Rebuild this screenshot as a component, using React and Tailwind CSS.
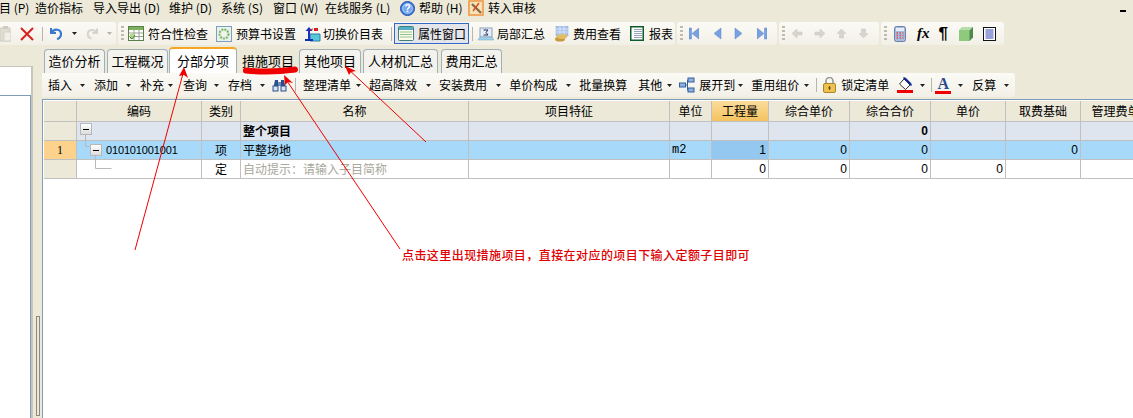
import React from 'react';

const Arrow = ({ className = 'ml-[4px]' }) => <span className={`w-[5px] h-[3px] shrink-0 ${className}`}><svg width="5" height="3" className="block"><path d="M0 0h5L2.500 3z" fill="#222"/></svg></span>;
const T = ({ children, className = '' }) => <span className={`whitespace-nowrap shrink-0 ${className}`}>{children}</span>;
const Sep = ({ className = '' }) => <span className={`w-px h-[14px] bg-[#b8b6a8] shrink-0 ${className}`} />;
const Grip = ({ className = '' }) => <span className={`w-[3px] h-[15px] shrink-0 bg-[repeating-linear-gradient(#bdbbb0_0_2px,transparent_2px_4px)] ${className}`} />;

const Blue = ({ d }) => <svg width="10" height="13" viewBox="0 0 10 13" className="shrink-0"><path d={d} fill="#7aa2e0" stroke="#5b86cc" strokeWidth=".5"/></svg>;
const Gray = ({ d }) => <svg width="11" height="11" viewBox="0 0 11 11" className="shrink-0"><path d={d} fill="#d5d4ce" stroke="#c8c7c0" strokeWidth=".5"/></svg>;

const SheetIcon = () => <svg width="16" height="15" viewBox="0 0 16 15" className="shrink-0"><rect x=".5" y=".5" width="15" height="14" fill="#fff" stroke="#5b7f4a"/><rect x="1" y="1" width="14" height="3" fill="#7fb05e"/><path d="M1 7h14M1 10.500h14M6 4v10M11 4v10" stroke="#9aa38f"/><rect x="2" y="8" width="4" height="5" fill="#bcd48a"/><path d="M2 11l2 2 3-4" stroke="#2c8a2c" fill="none"/></svg>;
const GearIcon = () => <svg width="16" height="16" viewBox="0 0 16 16" className="shrink-0"><rect x=".5" y=".5" width="15" height="15" fill="#e8f2ea" stroke="#7f9fc0"/><circle cx="8" cy="8" r="4.500" fill="none" stroke="#7fb56a" strokeWidth="2" strokeDasharray="2 1"/><circle cx="8" cy="8" r="2" fill="#f2f6e4"/></svg>;
const SwitchIcon = () => <svg width="17" height="16" viewBox="0 0 17 16" className="shrink-0"><rect x="6" y="8" width="10" height="7" fill="#57c7d8"/><path d="M6 8h10v7H6z" fill="none" stroke="#2b7fa8"/><path d="M1 14h8" stroke="#0f2fb0" strokeWidth="2"/><path d="M5 1L1.500 5h2.500v8h2V5h2.500z" fill="#1c2fc0"/><path d="M10 2h4v3h-4z" fill="#d92020"/><path d="M9 3l-3 1" stroke="#d92020"/></svg>;
const PropIcon = () => <svg width="16" height="15" viewBox="0 0 16 15" className="shrink-0"><rect x=".5" y=".5" width="15" height="14" rx="1" fill="#fffbe8" stroke="#3f7f80"/><rect x="1" y="1" width="14" height="3" fill="#55aec8"/><path d="M2 6h12M2 8.500h12M2 11h12" stroke="#8fc38e"/></svg>;
const SumIcon = () => <svg width="17" height="14" viewBox="0 0 17 14" className="shrink-0"><rect x="3" y="1" width="12" height="9" fill="#e8eef6" stroke="#8a9fb8"/><path d="M6.500 3H11L9 5.500 11 8H6.500" fill="none" stroke="#1c2c60"/><path d="M1 13l2-3h12l2 3z" fill="#9fd0e8" stroke="#7aa3c0" strokeWidth=".5"/></svg>;
const CoinIcon = () => <svg width="15" height="16" viewBox="0 0 15 16" className="shrink-0"><rect x="2" y="0" width="12" height="10" fill="#a9c4ee" stroke="#8ba7d3" strokeWidth=".5"/><path d="M2 3h12M2 6h12M6 0v10M10 0v10" stroke="#e8effa" strokeWidth=".7"/><ellipse cx="6" cy="13" rx="5" ry="2.600" fill="#c79a3e"/><ellipse cx="8" cy="10.500" rx="5" ry="2.400" fill="#e2bd64"/></svg>;
const ReportIcon = () => <svg width="14" height="15" viewBox="0 0 14 15" className="shrink-0"><rect x=".75" y=".75" width="12.500" height="13.500" fill="#fff" stroke="#0d5c2a" strokeWidth="1.500"/><path d="M4 3.500h8M4 5.500h8M4 7.500h8M4 9.500h8M4 11.500h8" stroke="#7d8ca8" strokeWidth=".8"/></svg>;
const CalcIcon = () => <svg width="12" height="16" viewBox="0 0 12 16" className="shrink-0"><rect x=".5" y=".5" width="11" height="15" rx="2" fill="#a8bce0" stroke="#6a7fa8"/><rect x="2" y="2" width="8" height="3" fill="#e8eef8"/><path d="M2.500 7h1.500M5.500 7h1.500M8.500 7h1M2.500 9.500h1.500M5.500 9.500h1.500M8.500 9.500h1M2.500 12h1.500M5.500 12h1.500M8.500 12h1" stroke="#d65050" strokeWidth="1.400"/></svg>;
const CubeIcon = () => <svg width="14" height="14" viewBox="0 0 14 14" className="shrink-0"><path d="M0 3.500L3.500 0H14v10.500L10.500 14H0z" fill="#4c8a4c"/><rect x="0" y="3.500" width="10.500" height="10.500" fill="#8fca7c"/><path d="M3.500 0H14L10.500 3.500H0z" fill="#b6deaa"/></svg>;
const ListIcon = () => <svg width="13" height="14" viewBox="0 0 13 14" className="shrink-0"><rect x=".5" y=".5" width="12" height="13" fill="#fff" stroke="#111"/><path d="M2.500 3h8M2.500 5h8M2.500 7h8M2.500 9h8M2.500 11h8" stroke="#1c2cb0" strokeWidth=".9"/></svg>;
const LockIcon = () => <svg width="13" height="16" viewBox="0 0 13 16" className="shrink-0"><path d="M3 7V4a3.500 3.500 0 017 0v3" fill="none" stroke="#9a9a90" strokeWidth="1.600"/><rect x=".5" y="6.500" width="12" height="9" rx="1.500" fill="#eec24e" stroke="#ad8428"/><path d="M6.500 9v4M5 11h3" stroke="#6c4f14"/></svg>;
const Binoculars = () => <svg width="15" height="14" viewBox="0 0 15 14" className="shrink-0"><path d="M1 12L3 2h3v10zM9 12V2h3l2 10z" fill="#2c4f8c"/><rect x="6" y="4" width="3" height="4" fill="#6d8ac0"/><rect x="1" y="8" width="5" height="5" fill="#d7e3f4" stroke="#2c4f8c"/><rect x="9" y="8" width="5" height="5" fill="#d7e3f4" stroke="#2c4f8c"/></svg>;
const TreeIcon = () => <svg width="16" height="16" viewBox="0 0 16 16" className="shrink-0"><rect x="9" y="1" width="6" height="4" fill="#8fb0e0" stroke="#35609c"/><rect x="0.5" y="6" width="6" height="4" fill="#8fb0e0" stroke="#35609c"/><rect x="9" y="11" width="6" height="4" fill="#8fb0e0" stroke="#35609c"/><path d="M6.500 8h2M8.500 3v10h.5M8.500 3H9" stroke="#35609c" fill="none"/></svg>;
const Paint = () => <svg width="16" height="16" viewBox="0 0 16 16" className="shrink-0"><path d="M7 2l6 6-4.500 4.500-6-5.500z" fill="#fff" stroke="#333"/><path d="M6 1c0-1 2-1 3 0l5 5c1 1 1 3 0 3l-1-1z" fill="#102a9c"/><rect x="0" y="13" width="16" height="3" fill="#f00000"/></svg>;
const Help = () => <svg width="15" height="15" viewBox="0 0 15 15" className="shrink-0"><circle cx="7.500" cy="7.500" r="7" fill="#3f7fe0" stroke="#2a4fa8"/><circle cx="7.500" cy="7.500" r="4.800" fill="#6fa5ee" stroke="#dbe8fb" strokeWidth=".8"/><text x="7.500" y="11" textAnchor="middle" fontSize="10" fontWeight="700" fill="#fff" fontFamily="Liberation Sans">?</text></svg>;
const Audit = () => <svg width="16" height="16" viewBox="0 0 16 16" className="shrink-0"><rect x="0" y="0" width="16" height="16" rx="1" fill="#f0a860"/><rect x="2" y="2" width="12" height="12" fill="#f6e4b8"/><path d="M4 4l9 9" stroke="#8a6a48" strokeWidth="2.400"/><path d="M11 3l-6 8" stroke="#d84a20" strokeWidth="1.400"/></svg>;
const Paste = () => <svg width="11" height="16" viewBox="0 0 11 16" className="shrink-0"><rect x="0" y="2" width="10" height="13" fill="#dfddd3" stroke="#cfcdc2"/><rect x="3" y="0" width="5" height="3" fill="#cfcdc2"/><rect x="4" y="6" width="7" height="9" fill="#f1efe6" stroke="#d5d3c8"/></svg>;

const Minus = () => <span className="w-[12px] h-[12px] border border-[#b8b8b8] bg-gradient-to-b from-white to-[#dcdcdc] flex items-center justify-center shrink-0"><span className="w-[6px] h-px bg-black" /></span>;

const cols = ['w-[33px]', 'w-[125px]', 'w-[39px]', 'w-[228px]', 'w-[201px]', 'w-[42px]', 'w-[57px]', 'w-[81px]', 'w-[81px]', 'w-[75px]', 'w-[75px]', 'w-[70px]'];
const heads = ['', '编码', '类别', '名称', '项目特征', '单位', '工程量', '综合单价', '综合合价', '单价', '取费基础', '管理费单'];

const Cell = ({ i, className = '', children }) => <div className={`${cols[i]} shrink-0 h-full border-r border-[#c0c0c0] flex items-center overflow-hidden whitespace-nowrap ${className}`}>{children}</div>;
const Num = ({ i, v, className = '' }) => <Cell i={i} className={`justify-end pr-[2px] font-['Liberation_Sans',sans-serif] ${className}`}>{v}</Cell>;

const bar = 'bg-gradient-to-b from-[#fbfaf6] to-[#f2f0e6]';
const tab = 'h-[24px] pb-[2px] rounded-t-[4px] border border-b-0 border-[#9fb0b8] bg-[#f3f2ec] flex items-center justify-center shrink-0';

export default function App() {
  return (
    <div className="relative w-[1133px] h-[418px] overflow-hidden bg-[#ece9d8] text-[12px] leading-none text-black font-['Noto_Sans_CJK_SC','Liberation_Sans',sans-serif]">
      {/* menu */}
      <div className="h-[16px] flex items-center relative">
        <T className="w-[35px] -indent-[1px]">目 (P)</T>
        <T className="w-[58px]">造价指标</T>
        <T className="w-[76px]">导入导出 (D)</T>
        <T className="w-[52px]">维护 (D)</T>
        <T className="w-[52px]">系统 (S)</T>
        <T className="w-[52px]">窗口 (W)</T>
        <T className="w-[75px]">在线服务 (L)</T>
        <Help />
        <T className="ml-[4px] w-[49px]">帮助 (H)</T>
        <Audit />
        <T className="ml-[4px]">转入审核</T>
        <span className="ml-auto mr-[7px] mt-[6px] w-[6px] h-[2px] bg-black" />
      </div>
      {/* toolbar */}
      <div className="h-[23px] mt-[6px] mb-[2px] flex items-center gap-[2px]">
        <div className={`w-[116px] h-[23px] rounded-r-[3px] ${bar} flex items-center shrink-0`}>
          <Paste />
          <svg width="14" height="14" viewBox="0 0 14 14" className="ml-[9px] shrink-0"><path d="M1 1l12 12M13 1L1 13" stroke="#d82020" strokeWidth="2"/></svg>
          <Sep className="ml-[8px]" />
          <svg width="13" height="13" viewBox="0 0 13 13" className="ml-[7px] shrink-0"><path d="M1 1v5h5M1.500 6C4 1 11 2 11 7c0 3-2 4.500-4 5" fill="none" stroke="#3a78d0" strokeWidth="2.200"/></svg>
          <Arrow className="ml-[9px]" />
          <svg width="12" height="13" viewBox="0 0 13 13" className="ml-[9px] shrink-0"><path d="M12 1v5H7M11.500 6C9 1 2 2 2 7c0 3 2 4.500 4 5" fill="none" stroke="#d4d3cc" strokeWidth="2.200"/></svg>
          <Arrow className="ml-[9px] opacity-30" />
        </div>
        <div className={`w-[557px] h-[23px] rounded-[3px] ${bar} flex items-center shrink-0 pl-[3px]`}>
          <Grip />
          <span className="ml-[4px]"><SheetIcon /></span><T className="ml-[4px]">符合性检查</T>
          <span className="ml-[8px]"><GearIcon /></span><T className="ml-[4px]">预算书设置</T>
          <span className="ml-[8px]"><SwitchIcon /></span><T className="ml-[2px]">切换价目表</T>
          <Sep className="ml-[8px]" />
          <div className="ml-[2px] w-[75px] h-[21px] border border-[#316ac5] bg-[#e3e5ea] flex items-center pl-[3px] shrink-0"><PropIcon /><T className="ml-[4px]">属性窗口</T></div>
          <Sep className="ml-[3px]" />
          <span className="ml-[4px]"><SumIcon /></span><T className="ml-[3px]">局部汇总</T>
          <span className="ml-[9px]"><CoinIcon /></span><T className="ml-[4px]">费用查看</T>
          <span className="ml-[9px]"><ReportIcon /></span><T className="ml-[5px]">报表</T>
        </div>
        <div className={`w-[100px] h-[23px] rounded-[3px] ${bar} flex items-center shrink-0 pl-[3px]`}>
          <Grip />
          <span className="ml-[6px]"><Blue d="M0 1h2.500v11H0zM10 1v11L3 6.500z" /></span>
          <span className="ml-[13px]"><Blue d="M9 1v11L2 6.500z" /></span>
          <span className="ml-[12px]"><Blue d="M1 1v11l7-5.500z" /></span>
          <span className="ml-[13px]"><Blue d="M7.500 1H10v11H7.500zM0 1v11l7-5.500z" /></span>
        </div>
        <div className={`w-[100px] h-[23px] rounded-[3px] ${bar} flex items-center shrink-0 pl-[3px]`}>
          <Grip />
          <span className="ml-[7px]"><Gray d="M5 1v3h5v3H5v3L0 5.500z" /></span>
          <span className="ml-[11px]"><Gray d="M6 1v3H1v3h5v3l5-4.500z" /></span>
          <span className="ml-[11px]"><Gray d="M1 5.500h2.500V10h4V5.500H10L5.500 1z" /></span>
          <span className="ml-[11px]"><Gray d="M1 5.500h2.500V1h4v4.500H10L5.500 10z" /></span>
        </div>
        <div className={`w-[123px] h-[23px] rounded-[3px] ${bar} flex items-center shrink-0 pl-[3px]`}>
          <Grip />
          <span className="ml-[7px]"><CalcIcon /></span>
          <T className="ml-[11px] font-['Liberation_Serif',serif] italic font-bold text-[15px]">fx</T>
          <T className="ml-[9px] font-['Liberation_Sans',sans-serif] font-bold text-[17px]">¶</T>
          <span className="ml-[11px]"><CubeIcon /></span>
          <span className="ml-[10px]"><ListIcon /></span>
        </div>
      </div>
      {/* body */}
      <div className="flex h-[371px]">
        <div className="w-[42px] shrink-0 flex pt-[19px]">
          <div className="w-[33px] h-full bg-white border-t border-r-2 border-[#c8c6ba] flex flex-col">
            <div className="h-[28px] shrink-0" />
            <div className="flex-1 border-t border-r border-[#7f9db9] bg-white" />
          </div>
          <div className="flex-1 flex flex-col justify-end items-center">
            <div className="w-[4px] h-[100px] border border-[#8a8a80] mb-[2px] ml-[1px]" />
          </div>
        </div>
        <div className="flex-1 min-w-0 flex flex-col">
          {/* tabs */}
          <div className="h-[26px] flex items-end pl-[2px] text-[13px]">
            <div className={`w-[61px] ${tab}`}>造价分析</div>
            <div className={`w-[61px] ml-[2px] ${tab}`}>工程概况</div>
            <div className="w-[68px] ml-px h-[26px] pb-[2px] rounded-t-[4px] border-x border-[#9fb0b8] border-t-2 border-t-[#f5a623] bg-white flex items-center justify-center shrink-0">分部分项</div>
            <div className="w-[62px] h-[24px] pb-[2px] flex items-center justify-center shrink-0">措施项目</div>
            <div className={`w-[62px] ${tab}`}>其他项目</div>
            <div className={`w-[75px] ml-[2px] ${tab}`}>人材机汇总</div>
            <div className={`w-[61px] ml-[3px] ${tab}`}>费用汇总</div>
          </div>
          {/* sub toolbar */}
          <div className={`h-[24px] w-[973px] rounded-r-[3px] ${bar} flex items-center`}>
            <T className="ml-[6px]">插入</T><Arrow className="ml-[8px]" />
            <T className="ml-[9px]">添加</T><Arrow className="ml-[8px]" />
            <T className="ml-[9px]">补充</T><Arrow className="ml-[4px]" />
            <T className="ml-[10px]">查询</T><Arrow className="ml-[7px]" />
            <T className="ml-[9px]">存档</T><Arrow className="ml-[8px]" />
            <span className="ml-[7px]"><Binoculars /></span>
            <Sep className="ml-[8px]" />
            <T className="ml-[7px]">整理清单</T><Arrow className="ml-[5px]" />
            <T className="ml-[8px]">超高降效</T><Arrow className="ml-[9px]" />
            <T className="ml-[8px]">安装费用</T><Arrow className="ml-[9px]" />
            <T className="ml-[8px]">单价构成</T><Arrow className="ml-[9px]" />
            <T className="ml-[8px]">批量换算</T>
            <T className="ml-[11px]">其他</T><Arrow className="ml-[5px]" />
            <span className="ml-[7px]"><TreeIcon /></span>
            <T className="ml-[4px]">展开到</T><Arrow className="ml-[3px]" />
            <T className="ml-[8px]">重用组价</T><Arrow className="ml-[5px]" />
            <Sep className="ml-[7px]" />
            <span className="ml-[6px]"><LockIcon /></span>
            <T className="ml-[5px]">锁定清单</T>
            <span className="ml-[8px]"><Paint /></span><Arrow className="ml-[7px]" />
            <Sep className="ml-[6px]" />
            <span className="ml-[3px] w-[16px] h-[17px] flex flex-col items-center shrink-0"><span className="font-['Liberation_Serif',serif] font-bold text-[16px] leading-[14px] text-[#2c4a90]">A</span><span className="w-full h-[3px] bg-[#f00000]" /></span><Arrow className="ml-[7px]" />
            <T className="ml-[9px]">反算</T><Arrow className="ml-[8px]" />
          </div>
          {/* grid */}
          <div className="flex-1 mt-[2px] border-t border-l border-[#7f9db9] bg-white pl-px pt-px">
            <div className="h-[21px] flex bg-[#ece9d8] border-b border-[#c0c0c0]">
              {heads.map((h, i) => <Cell key={i} i={i} className={`justify-center ${i === 6 ? 'bg-gradient-to-b from-[#fbdc9c] to-[#f4c25e]' : ''}`}>{h}</Cell>)}
            </div>
            <div className="h-[19px] flex bg-[#dee5ef] border-b border-[#c0c0c0]">
              <Cell i={0} className="bg-[#ece9d8]" />
              <Cell i={1} className="pl-[3px] items-start pt-[1px]"><Minus /></Cell>
              <Cell i={2} />
              <Cell i={3} className="pl-[2px] font-bold">整个项目</Cell>
              <Cell i={4} /><Cell i={5} /><Cell i={6} /><Cell i={7} />
              <Num i={8} v="0" className="font-bold" />
              <Cell i={9} /><Cell i={10} /><Cell i={11} />
            </div>
            <div className="h-[19px] flex bg-[#a6d9fa] border-b border-[#c0c0c0]">
              <Cell i={0} className="bg-[#fdd28c] justify-center font-['Liberation_Serif',serif]">1</Cell>
              <Cell i={1} className="pl-[13px]"><Minus /><span className="ml-[4px] font-['Liberation_Sans',sans-serif] text-[11px] tracking-[-0.15px]">010101001001</span></Cell>
              <Cell i={2} className="justify-center">项</Cell>
              <Cell i={3} className="pl-[2px]">平整场地</Cell>
              <Cell i={4} />
              <Cell i={5} className="pl-[2px] font-['Liberation_Mono',monospace]">m2</Cell>
              <Num i={6} v="1" className="bg-[#94c8f0]" />
              <Num i={7} v="0" /><Num i={8} v="0" /><Cell i={9} /><Num i={10} v="0" /><Cell i={11} />
            </div>
            <div className="h-[19px] flex bg-white border-b border-[#c0c0c0]">
              <Cell i={0} className="bg-[#ece9d8]" />
              <Cell i={1} />
              <Cell i={2} className="justify-center">定</Cell>
              <Cell i={3} className="pl-[2px] text-[#a9a89c]">自动提示：请输入子目简称</Cell>
              <Cell i={4} /><Cell i={5} />
              <Num i={6} v="0" /><Num i={7} v="0" /><Num i={8} v="0" /><Num i={9} v="0" /><Cell i={10} /><Cell i={11} />
            </div>
          </div>
        </div>
      </div>

      {/* tree connectors and annotation overlay */}
      <svg width="1133" height="418" className="absolute left-0 top-0 pointer-events-none">
        <path d="M85.500 135v11.500h4M95.500 155v13.500h16" fill="none" stroke="#b8b8b8" />
        <path d="M135 250L184 70M400 249L285 78M426 142L346 67" stroke="#f00000" fill="none" />
        <path d="M184 67l-5 9 5-1 4 3zM284 75l1 10 3-3 5 1zM345 66l4 9 2-3 5-1z" fill="#f00000" />
        <path d="M246 70.500c15 1.500 35 1 49-1" stroke="#f00000" strokeWidth="6" strokeLinecap="round" fill="none" />
      </svg>
      <div className="absolute left-[402px] top-[249px] text-[#e00000] whitespace-nowrap tracking-[0.43px] font-medium">点击这里出现措施项目，直接在对应的项目下输入定额子目即可</div>
    </div>
  );
}
